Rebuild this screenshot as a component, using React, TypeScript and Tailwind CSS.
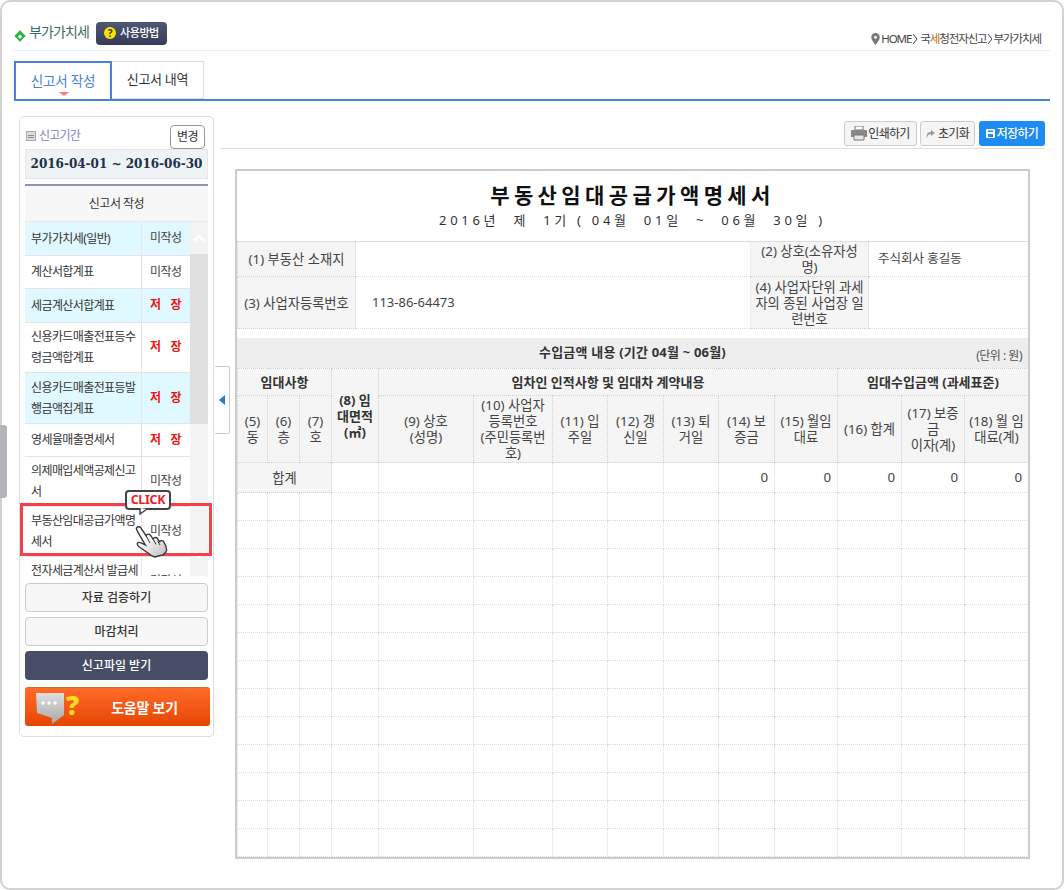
import React from 'react';

const FONT = '"Noto Sans", "Noto Sans CJK KR", sans-serif';

const sideRows = [
  { name: '부가가치세(일반)', status: '미작성', tint: true, h: 'h-[33px]' },
  { name: '계산서합계표', status: '미작성', tint: false, h: 'h-[33px]' },
  { name: '세금계산서합계표', status: '저 장', tint: true, h: 'h-[34px]' },
  { name: '신용카드매출전표등수령금액합계표', status: '저 장', tint: false, h: 'h-[50px]' },
  { name: '신용카드매출전표등발행금액집계표', status: '저 장', tint: true, h: 'h-[51px]' },
  { name: '영세율매출명세서', status: '저 장', tint: false, h: 'h-[33px]' },
  { name: '의제매입세액공제신고서', status: '미작성', tint: false, h: 'h-[50px]' },
  { name: '부동산임대공급가액명세서', status: '미작성', tint: false, h: 'h-[50px]' },
  { name: '전자세금계산서 발급세액공제신고서', status: '미작성', tint: false, h: 'h-[50px]' },
];

const colWidths = [30, 32, 32, 47, 95, 79, 55, 56, 55, 56, 63, 64, 63, 64];

const subHeads = [
  '(5)\n동', '(6)\n층', '(7)\n호', null, '(9) 상호\n(성명)', '(10) 사업자\n등록번호\n(주민등록번\n호)',
  '(11) 입\n주일', '(12) 갱\n신일', '(13) 퇴\n거일', '(14) 보\n증금', '(15) 월임\n대료', '(16) 합계', '(17) 보증\n금\n이자(계)', '(18) 월 임\n대료(계)',
];

const th = 'border border-dotted border-[#d0d0d0] bg-[#f5f5f5] text-center leading-[16px] px-0 whitespace-pre-line';
const thN = `${th} font-normal text-[#444]`;
const thB = `${th} font-bold text-[13px] text-[#333]`;
const td = 'border border-dotted border-[#dcdcdc]';

function SideTable() {
  return (
    <div className="flex h-[354px] overflow-hidden">
      <table className="w-[165px] table-fixed border-collapse self-start">
        <colgroup>
          <col className="w-[116px]" />
          <col className="w-[49px]" />
        </colgroup>
        <tbody>
          {sideRows.map((r) => (
            <tr key={r.name} className={`${r.h} ${r.tint ? 'bg-[#e0f8ff]' : 'bg-white'} border-b border-[#e4e4e4]`}>
              <td className="pl-[6px] text-[12px] leading-[21px] tracking-[-0.6px] text-[#333] break-all border-r border-[#e4e4e4]">
                {r.name}
              </td>
              <td className={`text-center text-[12px] ${r.status === '저 장' ? 'font-bold text-[#f01010] whitespace-pre' : 'text-[#444] tracking-[-0.6px]'}`}>
                {r.status === '저 장' ? '저   장' : r.status}
              </td>
            </tr>
          ))}
        </tbody>
      </table>
      <div className="w-[18px] flex flex-col bg-[#f3f3f3]">
        <div className="h-[32px] flex items-center justify-center">
          <svg width="12" height="8" viewBox="0 0 12 8" fill="none" stroke="#fff" strokeWidth="2.5"><path d="M1 7l5-5 5 5" /></svg>
        </div>
        <div className="h-[170px] bg-[#e0e0e0]" />
        <div className="h-[152px] flex items-end justify-center pb-[17px]">
          <svg width="12" height="8" viewBox="0 0 12 8" fill="none" stroke="#fff" strokeWidth="2.5"><path d="M1 1l5 5 5-5" /></svg>
        </div>
      </div>
    </div>
  );
}

function Hand() {
  return (
    <svg width="60" height="75" viewBox="0 0 180 225" className="absolute left-[120px] top-[485px]">
      <defs>
        <linearGradient id="palm" x1="0" y1="0" x2="1" y2="1">
          <stop offset="0.3" stopColor="#ffffff" />
          <stop offset="1" stopColor="#bdbdbd" />
        </linearGradient>
      </defs>
      <path
        d="M49 130c3-6 10-6 13-2l16 24c3-5 10-6 13-2l8 12c3-5 9-6 13-2l7 10c3-4 9-4 12 0 6 10 9 18 9 26-1 6-6 10-12 14l-24 6c-8-2-12-5-17-10l-29-20c-8-5-8-14-1-14 5 0 12 4 19 8l-22-38c-3-5-4-8-5-12z"
        fill="url(#palm)"
        stroke="#333"
        strokeWidth="4"
      />
      <path d="M78 152l12 22M99 162l9 16M113 168l7 12" stroke="#333" strokeWidth="3" fill="none" />
    </svg>
  );
}

export default function App() {
  return (
    <div className="w-[1064px] h-[890px] relative overflow-hidden bg-white text-[12px] text-[#333]" style={{ fontFamily: FONT }}>
      <div className="h-full border-2 border-[#d2d2d2] rounded-[10px] px-[12px]">
        {/* title row */}
        <div className="h-[49px] flex items-end justify-between border-b border-[#ececec] pb-[3px]">
          <div className="flex items-center mb-[2px]">
            <span className="w-[8px] h-[8px] bg-[#2fb344] rotate-45 flex items-center justify-center ml-[2px] mt-[5px]">
              <span className="w-[3px] h-[3px] bg-white" />
            </span>
            <span className="ml-[5px] mb-[3px] text-[14px] tracking-[-0.9px] text-[#3d6b63]">부가가치세</span>
            <span className="ml-[7px] w-[71px] h-[23px] rounded-[4px] bg-gradient-to-b from-[#4f5775] to-[#363c57] flex items-center justify-center gap-[4px] text-white text-[11px] font-medium tracking-[-0.4px]">
              <span className="w-[12px] h-[12px] rounded-full bg-[#ffe200] text-[#333] text-[10px] font-bold flex items-center justify-center">?</span>
              사용방법
            </span>
          </div>
          <div className="flex items-center mr-[9px] text-[11.500px] leading-[16px] tracking-[-1.1px] text-[#444]">
            <svg width="9" height="12" viewBox="0 0 9 12" className="mr-[1px]">
              <path d="M4.5 0a4.2 4.2 0 0 0-4.2 4.2C.3 7 4.5 12 4.5 12s4.2-5 4.2-7.800A4.200 4.200 0 0 0 4.500 0zm0 5.800a1.500 1.500 0 1 1 0-3 1.500 1.500 0 0 1 0 3z" fill="#777" />
            </svg>
            HOME
            <svg width="7" height="12" viewBox="0 0 7 12" fill="none" stroke="#444" className="mx-[1px]"><path d="M1 1l4 5-4 5" /></svg>
            <span>국<span className="text-[#c06a20]">세</span>청전자신고</span>
            <svg width="7" height="12" viewBox="0 0 7 12" fill="none" stroke="#444"><path d="M1 1l4 5-4 5" /></svg>
            부가가치세
          </div>
        </div>

        {/* tabs */}
        <div className="mt-[10px] h-[40px] flex border-b-2 border-[#4a7fdc]">
          <div className="relative w-[98px] h-[40px] border-2 border-[#4a7fdc] bg-white flex items-center justify-center text-[13.500px] text-[#4a7fdc] tracking-[-0.2px]">
            신고서 작성
            <span className="absolute bottom-[3px] left-[43px] w-0 h-0 border-x-[5px] border-x-transparent border-t-[4px] border-t-[#f77]" />
          </div>
          <div className="w-[92px] h-[38px] border border-l-0 border-[#ddd] flex items-center justify-center text-[13px] text-[#333] tracking-[-0.3px]">
            신고서 내역
          </div>
        </div>

        {/* body */}
        <div className="mt-[15px] ml-[5px] flex gap-[6px]">
          {/* sidebar */}
          <div className="w-[195px] h-[621px] border border-[#ddd] rounded-[5px] px-[5px] flex flex-col">
            <div className="h-[32px] flex items-end justify-between">
              <div className="flex items-center self-start mt-[10px]">
                <span className="w-[10px] h-[10px] ml-[1px] bg-[#ddd] border border-[#aaa] flex flex-col justify-center gap-[1px] px-[1px]">
                  <span className="h-px bg-[#888]" /><span className="h-px bg-[#888]" />
                </span>
                <span className="ml-[3px] text-[12px] tracking-[-0.8px] text-[#7b86c4]">신고기간</span>
              </div>
              <button className="w-[35px] h-[24px] mr-[3px] border border-[#999] rounded-[4px] bg-white text-[12px] text-[#333] tracking-[-0.5px]">변경</button>
            </div>
            <div className="h-[30px] bg-[#eef3f6] border border-[#e6e6e6] flex items-center justify-center text-[12px] font-bold text-[#1f3048] whitespace-nowrap" style={{ fontFamily: '"DejaVu Serif", serif' }}>
              2016-04-01 ~ 2016-06-30
            </div>
            <div className="mt-[5px] h-[2px] bg-[#8b97b8]" />
            <div className="h-[35px] bg-[#f7f7f7] flex items-center justify-center text-[12px] tracking-[-0.5px] text-[#333]">신고서 작성</div>
            <div className="h-px bg-[#e8e8e8]" />
            <SideTable />
            <button className="mt-[7px] h-[29px] rounded-[4px] border border-[#ccc] bg-[#f7f7f7] text-[12px] font-medium text-[#333]">자료 검증하기</button>
            <button className="mt-[5px] h-[29px] rounded-[4px] border border-[#ccc] bg-[#f7f7f7] text-[12px] font-medium text-[#333]">마감처리</button>
            <button className="mt-[5px] h-[29px] rounded-[4px] bg-[#474d66] text-[12px] font-medium text-white">신고파일 받기</button>
            <button className="mt-[7px] w-[185px] h-[39px] rounded-[3px] bg-gradient-to-b from-[#ff6a26] to-[#e54600] border-t border-[#c8741e] flex items-center text-white">
              <svg width="30" height="33" viewBox="0 0 30 33" className="ml-[10px] mt-[2px]">
                <defs>
                  <linearGradient id="bubble" x1="0" y1="0" x2="0" y2="1">
                    <stop offset="0" stopColor="#dedede" />
                    <stop offset="1" stopColor="#a8a8a8" />
                  </linearGradient>
                </defs>
                <path d="M1 1h28v22l-12 9v-6L2 21z" fill="url(#bubble)" />
                <circle cx="8" cy="11" r="1.800" fill="#fff" /><circle cx="14" cy="11" r="1.800" fill="#fff" /><circle cx="20" cy="11" r="1.800" fill="#fff" />
              </svg>
              <span className="text-[26px] leading-none font-black text-[#ffdf1a] ml-[1px] mb-[4px]">?</span>
              <span className="ml-[32px] text-[14px] font-bold tracking-[-0.2px]">도움말 보기</span>
            </button>
          </div>

          {/* content */}
          <div className="w-[825px]">
            <div className="pt-[5px] pb-[2px] flex justify-end gap-[3px] border-b border-[#ddd] text-[12px] tracking-[-0.7px]">
              <button className="w-[73px] h-[25px] rounded-[3px] border border-[#ccc] bg-[#f5f5f5] flex items-center justify-center gap-[1px] text-[#333]">
                <svg width="16" height="15" viewBox="0 0 16 15">
                  <path d="M4 0h8v4H4z" fill="#fff" stroke="#777" />
                  <path d="M1 4h14a1 1 0 0 1 1 1v6H0V5a1 1 0 0 1 1-1z" fill="#888" />
                  <path d="M3 9h10v5H3z" fill="#e8e8e8" stroke="#777" />
                </svg>
                인쇄하기
              </button>
              <button className="w-[55px] h-[25px] rounded-[3px] border border-[#ccc] bg-[#f5f5f5] flex items-center justify-center gap-[3px] text-[#333]">
                <svg width="9" height="8" viewBox="0 0 9 8"><path d="M5 0l4 3-4 3V4C3 4 1.500 5 1 8 0 4 2 2 5 2z" fill="#999" /></svg>
                초기화
              </button>
              <button className="w-[66px] h-[25px] ml-[1px] rounded-[3px] bg-[#1e8cf0] flex items-center justify-center gap-[2px] text-white font-medium">
                <svg width="9" height="9" viewBox="0 0 9 9"><path d="M1 0h7a1 1 0 0 1 1 1v7a1 1 0 0 1-1 1H1a1 1 0 0 1-1-1V1a1 1 0 0 1 1-1z" fill="#fff" /><path d="M2 1.500h5v1.500H2zM2 5h5v3H2z" fill="#1e8cf0" /></svg>
                저장하기
              </button>
            </div>

            <div className="mt-[20px] ml-[15px] w-[795px] h-[690px] border-2 border-[#cccccc] overflow-hidden">
              <div className="h-[70px] flex flex-col items-center text-[#111]">
                <div className="mt-[11px] text-[21px] leading-[26px] font-bold tracking-[4.400px]">부동산임대공급가액명세서</div>
                <div className="mt-[2px] text-[13px] leading-[20px] tracking-[3.700px] whitespace-pre text-[#333]">2016년  제  1기 ( 04월  01일  ~  06월  30일 )</div>
              </div>

              <table className="w-[791px] table-fixed border-collapse border-t border-[#ddd] text-[13.300px] text-[#444]">
                <colgroup>
                  <col className="w-[118px]" />
                  <col className="w-[395px]" />
                  <col className="w-[118px]" />
                  <col className="w-[160px]" />
                </colgroup>
                <tbody>
                  <tr className="h-[35px]">
                    <th className={thN}>(1) 부동산 소재지</th>
                    <td className={td}></td>
                    <th className={thN}>{'(2) 상호(소유자성\n명)'}</th>
                    <td className={`${td} pl-[9px] text-[12.500px]`}>주식회사 홍길동</td>
                  </tr>
                  <tr className="h-[52px]">
                    <th className={thN}>(3) 사업자등록번호</th>
                    <td className={`${td} pl-[16px] text-[13px]`}>113-86-64473</td>
                    <th className={thN}>{'(4) 사업자단위 과세\n자의 종된 사업장 일\n련번호'}</th>
                    <td className={td}></td>
                  </tr>
                </tbody>
              </table>

              <div className="mt-[9px] h-[30px] bg-[#eeeeee] relative flex items-center justify-center text-[13px] tracking-[0.2px] font-bold text-[#333]">
                수입금액 내용 (기간 04월 ~ 06월)
                <span className="absolute right-[6px] top-[9px] font-normal text-[12px] tracking-[-0.5px] text-[#555]">(단위 : 원)</span>
              </div>

              <table className="w-[791px] table-fixed border-collapse text-[13.300px] text-[#444]">
                <colgroup>
                  {colWidths.map((w, i) => (
                    <col key={i} style={{ width: w }} />
                  ))}
                </colgroup>
                <tbody>
                  <tr className="h-[27px]">
                    <th colSpan={3} className={thB}>임대사항</th>
                    <th rowSpan={2} className={thB}>{'(8) 임\n대면적\n(㎡)'}</th>
                    <th colSpan={7} className={thB}>임차인 인적사항 및 임대차 계약내용</th>
                    <th colSpan={3} className={thB}>임대수입금액 (과세표준)</th>
                  </tr>
                  <tr className="h-[67px]">
                    {subHeads.map((h, i) => (h ? <th key={i} className={thN}>{h}</th> : null))}
                  </tr>
                  <tr className="h-[30px]">
                    <th colSpan={3} className={thN}>합계</th>
                    {colWidths.slice(3).map((_, i) => (
                      <td key={i} className={`${td} text-right pr-[6px]`}>{i >= 6 ? '0' : ''}</td>
                    ))}
                  </tr>
                  {Array.from({ length: 13 }).map((_, r) => (
                    <tr key={r} className="h-[28px]">
                      {colWidths.map((_, i) => (
                        <td key={i} className={td}></td>
                      ))}
                    </tr>
                  ))}
                </tbody>
              </table>
            </div>
          </div>
        </div>
      </div>

      {/* things lying over the page */}
      <div className="absolute left-0 top-[425px] w-[7px] h-[73px] rounded-r-[3px] bg-[#b4b4b8]" />
      <div className="absolute left-[215px] top-[366px] w-[15px] h-[68px] border border-l-0 border-[#ccc] rounded-r-[2px] bg-white flex items-center justify-center">
        <span className="w-0 h-0 border-y-[5px] border-y-transparent border-r-[6px] border-r-[#1a7fd6]" />
      </div>
      <div className="absolute left-[20px] top-[503px] w-[192px] h-[53px] border-[3px] border-[#f5404c]" />
      <div className="absolute left-[125px] top-[490px] w-[46px] h-[20px] bg-white border-2 border-[#444] rounded-[4px] flex items-center justify-center text-[12.500px] tracking-[-0.3px] font-bold text-[#ee1c25]">
        CLICK
      </div>
      <svg width="10" height="7" viewBox="0 0 10 7" className="absolute left-[139px] top-[508px]">
        <path d="M1 0v6l7-5" fill="#fff" stroke="#444" strokeWidth="1.500" />
      </svg>
      <Hand />
    </div>
  );
}
